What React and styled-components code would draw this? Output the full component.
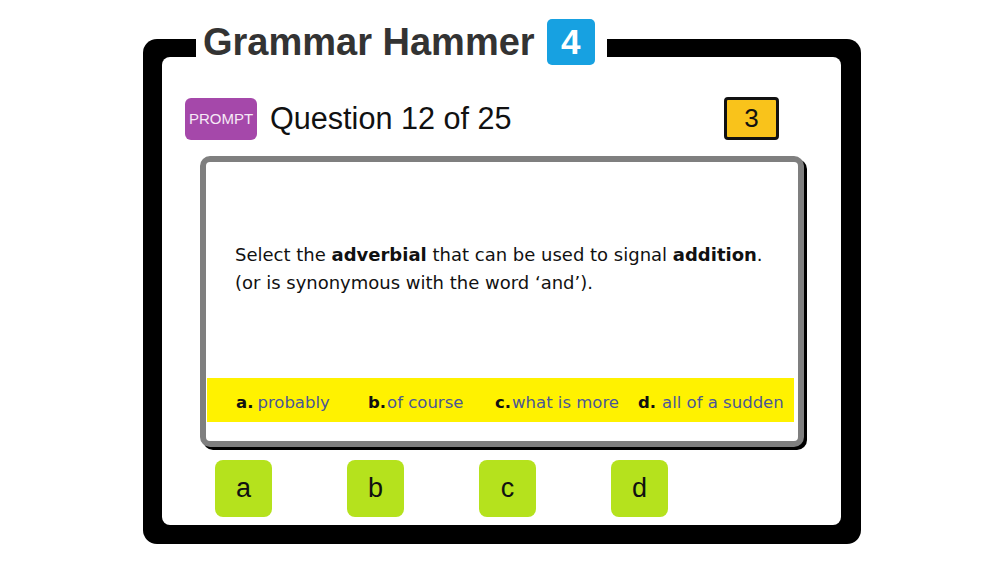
import React from "react";
import styled, { createGlobalStyle } from "styled-components";

const Global = createGlobalStyle`
  html, body { margin: 0; padding: 0; background: #ffffff; }
  body { font-family: "Liberation Sans", Arial, sans-serif; }
`;

const Page = styled.div`
  width: 1000px;
  height: 563px;
  padding: 39px 0 0 143px;
  box-sizing: border-box;
  background: #fff;
`;

const Frame = styled.div`
  position: relative;
  width: 718px;
  height: 505px;
  box-sizing: border-box;
  background: #000;
  border-radius: 14px;
  padding: 18px 20px 19px 19px;
`;

const TitleBar = styled.div`
  position: absolute;
  left: 53px;
  top: -20px;
  height: 46px;
  display: flex;
  align-items: center;
  gap: 12px;
  padding: 0 12px 0 7px;
  background: #fff;
`;

const Title = styled.h1`
  margin: 0;
  font-family: "Liberation Sans", Arial, sans-serif;
  font-weight: 700;
  font-size: 38px;
  line-height: 46px;
  color: #333333;
`;

const LevelBadge = styled.div`
  width: 48px;
  height: 46px;
  border-radius: 5px;
  background: #17a1e1;
  color: #fff;
  font-weight: 700;
  font-size: 35px;
  display: flex;
  align-items: center;
  justify-content: center;
`;

const Inner = styled.div`
  height: 100%;
  box-sizing: border-box;
  background: #fff;
  border-radius: 8px;
  padding-top: 40px;
  display: flex;
  flex-direction: column;
`;

const Header = styled.div`
  display: flex;
  align-items: center;
  height: 43px;
  padding: 0 62px 0 23px;
`;

const PromptButton = styled.div`
  width: 72px;
  height: 42px;
  border-radius: 6px;
  background: #a548aa;
  color: #f6eaf6;
  font-size: 15px;
  display: flex;
  align-items: center;
  justify-content: center;
`;

const QuestionCount = styled.div`
  margin-left: 13px;
  font-size: 30.6px;
  color: #111;
  line-height: 43px;
`;

const Score = styled.div`
  margin-left: auto;
  width: 55px;
  height: 43px;
  box-sizing: border-box;
  border: 3px solid #111;
  border-radius: 4px;
  background: #f9c31b;
  color: #111;
  font-size: 26px;
  display: flex;
  align-items: center;
  justify-content: center;
`;

const Card = styled.div`
  margin: 16px 37px 0 38px;
  height: 291px;
  box-sizing: border-box;
  border: 6px solid #7f7f7f;
  border-radius: 10px;
  box-shadow: 3px 3px 0 #000;
  background: #fff;
  display: flex;
  flex-direction: column;
`;

const QuestionText = styled.p`
  margin: 79px 0 0 29px;
  font-family: "DejaVu Sans", "Liberation Sans", sans-serif;
  font-size: 18px;
  line-height: 28px;
  color: #111;
  b { font-weight: 700; }
`;

const OptionBand = styled.div`
  margin: auto 4px 19px 1px;
  height: 44px;
  box-sizing: border-box;
  padding: 5px 0 0 29px;
  background: #fff200;
  display: flex;
  align-items: center;
  font-family: "DejaVu Sans", "Liberation Sans", sans-serif;
  font-size: 16.5px;
`;

const Option = styled.div`
  width: ${(p) => p.$w}px;
  flex: none;
  white-space: nowrap;
  color: #4b5796;
`;

const OptLetter = styled.span`
  color: #111;
  font-weight: 700;
  margin-right: ${(p) => p.$gap}px;
`;

const Buttons = styled.div`
  display: flex;
  gap: 75px;
  margin-top: 13px;
  padding-left: 53px;
`;

const AnswerButton = styled.div`
  width: 57px;
  height: 57px;
  border-radius: 8px;
  background: #b5e21d;
  color: #111;
  font-size: 27px;
  display: flex;
  align-items: center;
  justify-content: center;
`;

const options = [
  { l: "a.", t: "probably", w: 132, g: 4 },
  { l: "b.", t: "of course", w: 127, g: 1 },
  { l: "c.", t: "what is more", w: 143, g: 1 },
  { l: "d.", t: "all of a sudden", w: 150, g: 6 },
];

export default function App() {
  return (
    <>
      <Global />
      <Page>
        <Frame>
          <TitleBar>
            <Title>Grammar Hammer</Title>
            <LevelBadge>4</LevelBadge>
          </TitleBar>
          <Inner>
            <Header>
              <PromptButton>PROMPT</PromptButton>
              <QuestionCount>Question 12 of 25</QuestionCount>
              <Score>3</Score>
            </Header>
            <Card>
              <QuestionText>
                Select the <b>adverbial</b> that can be used to signal <b>addition</b>.
                <br />
                (or is synonymous with the word ‘and’).
              </QuestionText>
              <OptionBand>
                {options.map((o) => (
                  <Option key={o.l} $w={o.w}>
                    <OptLetter $gap={o.g}>{o.l}</OptLetter>
                    {o.t}
                  </Option>
                ))}
              </OptionBand>
            </Card>
            <Buttons>
              {["a", "b", "c", "d"].map((l) => (
                <AnswerButton key={l}>{l}</AnswerButton>
              ))}
            </Buttons>
          </Inner>
        </Frame>
      </Page>
    </>
  );
}
